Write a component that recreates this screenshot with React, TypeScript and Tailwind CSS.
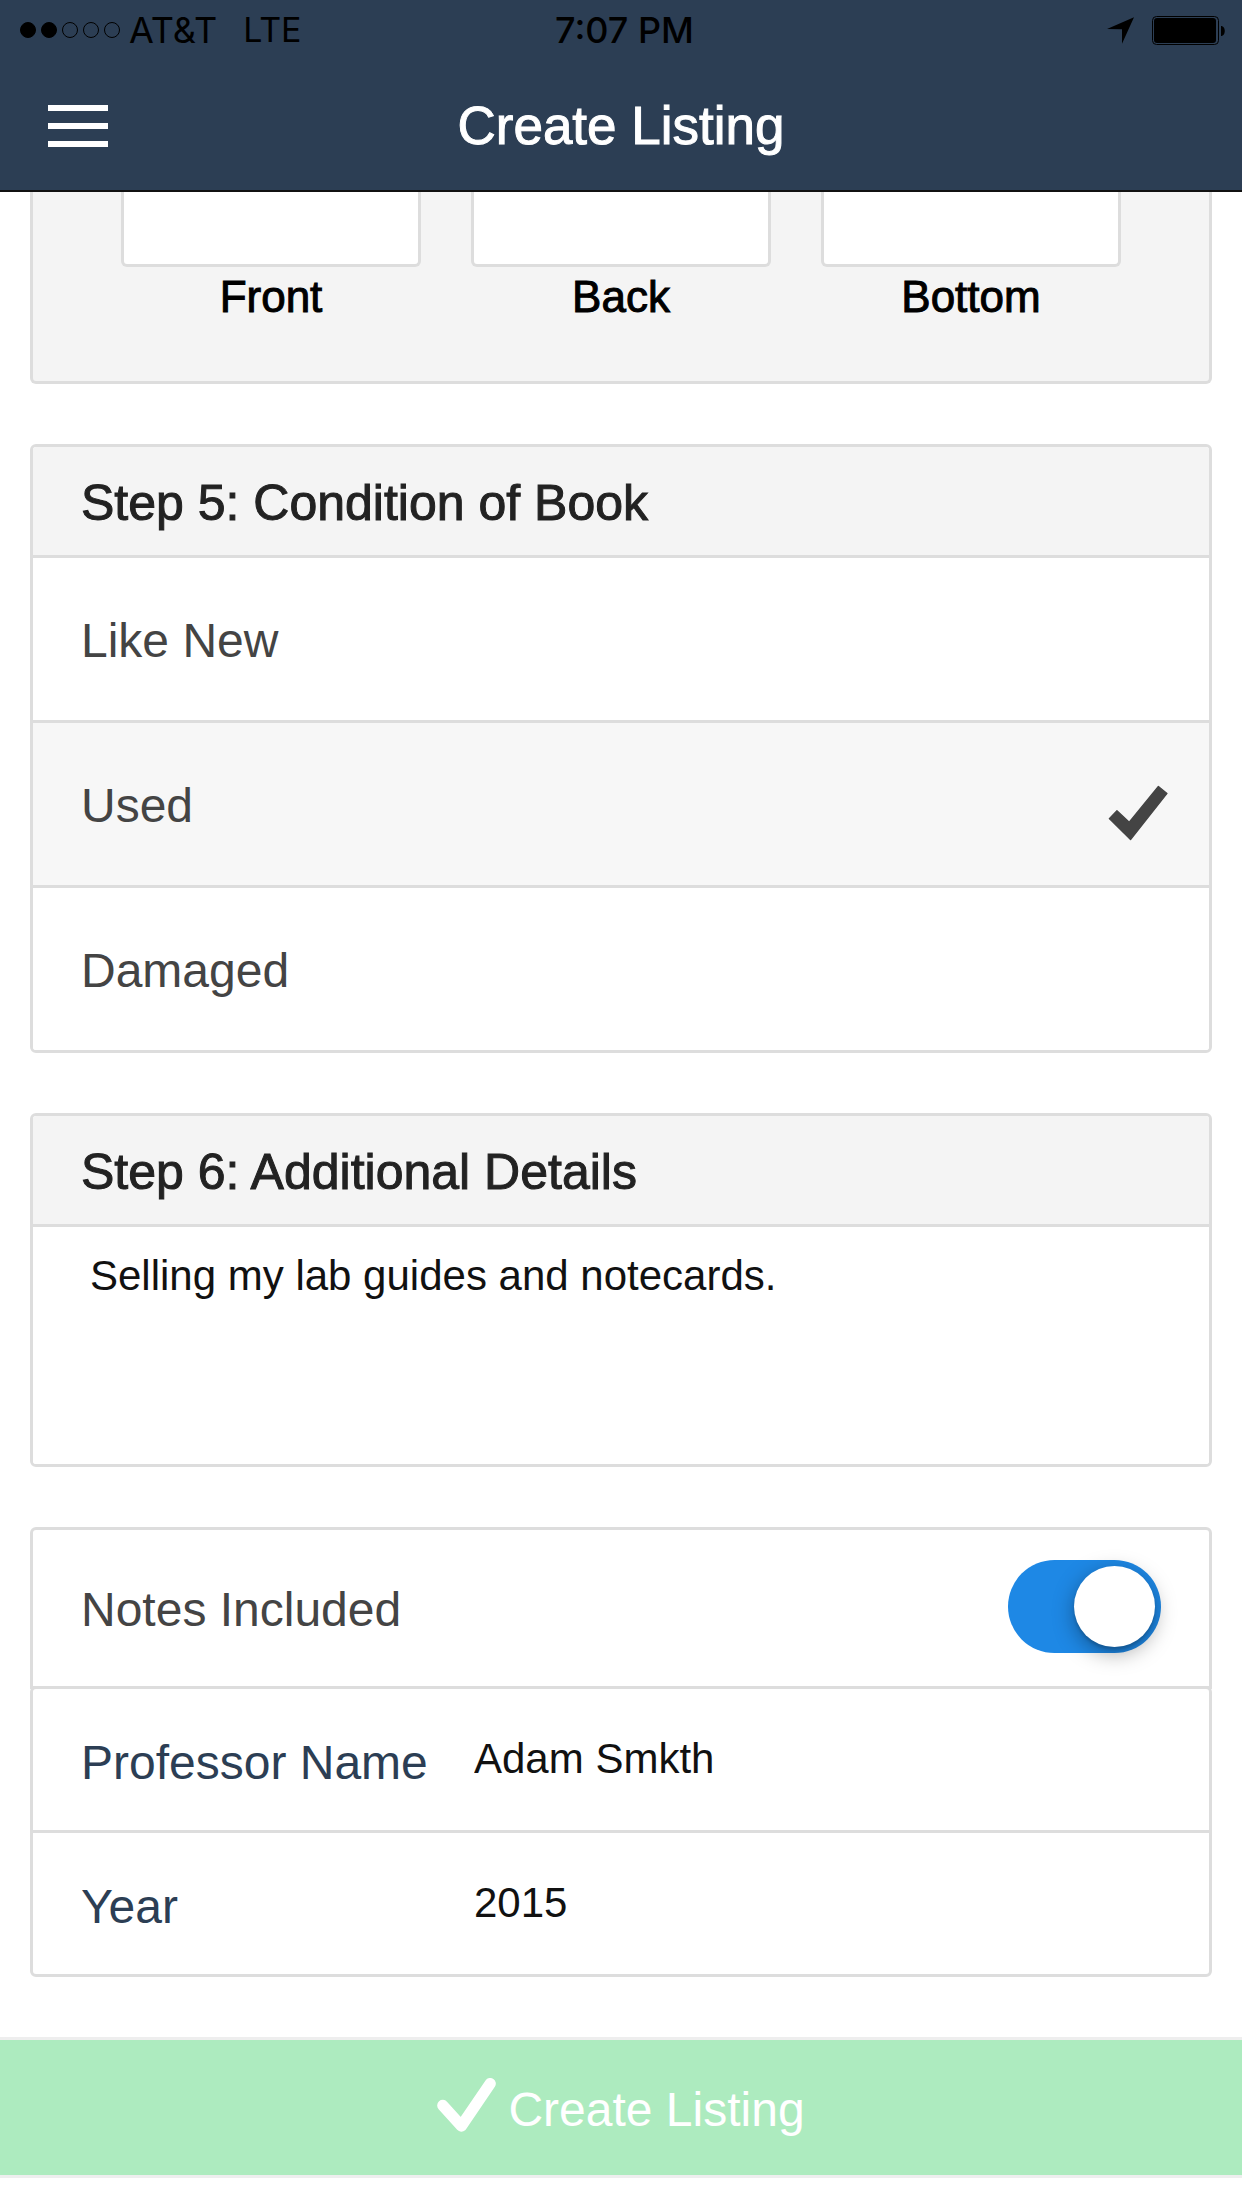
import { useState } from "react";
import type { ReactNode } from "react";

const conditions = ["Like New", "Used", "Damaged"];

function StatusBar() {
  return (
    <div className="grid h-[60px] grid-cols-[1fr_auto_1fr] items-center pr-[17px] pl-5 font-['Inter',sans-serif] text-[36px] leading-[60px] text-black">
      <div className="flex items-center">
        <div className="flex gap-[5px]">
          {[true, true, false, false, false].map((filled, i) => (
            <span
              key={i}
              className={`size-4 rounded-full border border-black ${filled ? "bg-black" : ""}`}
            />
          ))}
        </div>
        <span className="ml-[9px]">AT&amp;T</span>
        <span className="ml-[26px] text-[34px]">LTE</span>
      </div>
      <span className="pl-1 font-medium">7:07 PM</span>
      <div className="flex items-center justify-end gap-[18px]">
        <svg width="27" height="27" viewBox="0 0 81 79" aria-hidden="true">
          <path d="M0 35 81 0 45 79V36Z" fill="#000" />
        </svg>
        <svg width="73" height="29" viewBox="0 0 73 29" aria-hidden="true">
          <rect x="0.5" y="0.5" width="66" height="28" rx="4" fill="none" stroke="#000" />
          <rect x="2" y="2" width="62" height="25" rx="3" fill="#000" />
          <path d="M69 10c5 0 5 10 0 10Z" fill="#000" />
        </svg>
      </div>
    </div>
  );
}

function CardHeading({ children }: { children: ReactNode }) {
  return (
    <h2 className="border-b-3 border-[#ddd] bg-[#f4f4f4] px-12 pt-[26px] pb-[22px] text-[50px] leading-[60px] text-[#222] [-webkit-text-stroke:1px_#222]">
      {children}
    </h2>
  );
}

function Field({ id, label, initial }: { id: string; label: string; initial: string }) {
  return (
    <div className="flex items-center px-12">
      <label htmlFor={id} className="w-[393px] shrink-0 pt-[44px] pb-[37px] text-[48px] leading-[60px] text-[#2c3e54]">
        {label}
      </label>
      <input
        id={id}
        type="text"
        defaultValue={initial}
        className="mb-[2px] h-[60px] min-w-0 flex-1 bg-transparent text-[42px] leading-[60px] text-[#111] outline-none"
      />
    </div>
  );
}

export default function App() {
  const [condition, setCondition] = useState("Used");
  const [notes, setNotes] = useState(true);

  return (
    <div className="min-h-screen bg-white font-['Liberation_Sans',Arial,sans-serif]">
      <header className="border-b-2 border-[#111] bg-[#2c3e54]">
        <StatusBar />
        <div className="grid h-[130px] grid-cols-[1fr_auto_1fr] items-center px-12 pt-[2px]">
          <button type="button" aria-label="Menu" className="flex w-[60px] flex-col gap-3">
            <span className="h-[6px] bg-white" />
            <span className="h-[6px] bg-white" />
            <span className="h-[6px] bg-white" />
          </button>
          <h1 className="text-[53px] leading-[60px] text-white [-webkit-text-stroke:1px_#fff]">
            Create Listing
          </h1>
        </div>
      </header>

      <form onSubmit={(e) => e.preventDefault()}>
        <div className="flex flex-col gap-[60px] px-[30px] pb-[60px]">
          <section className="flex justify-between gap-[50px] rounded-b-[6px] border-3 border-t-0 border-[#ddd] bg-[#f4f4f4] px-[88px] pb-[54px]">
            {["Front", "Back", "Bottom"].map((side) => (
              <button key={side} type="button" className="flex flex-1 flex-col">
                <span className="h-[75px] w-full rounded-b-[6px] border-3 border-t-0 border-[#ddd] bg-white" />
                <span className="w-full text-center text-[44px] leading-[60px] text-black [-webkit-text-stroke:1px_#000]">
                  {side}
                </span>
              </button>
            ))}
          </section>

          <section className="overflow-hidden rounded-[6px] border-3 border-[#ddd]">
            <CardHeading>Step 5: Condition of Book</CardHeading>
            <div role="radiogroup" aria-label="Condition of Book" className="divide-y-3 divide-[#ddd]">
              {conditions.map((name) => (
                <label
                  key={name}
                  className={`flex items-center justify-between pr-[42px] pl-12 ${
                    condition === name ? "bg-[#f7f7f7]" : "bg-white"
                  }`}
                >
                  <span className="pt-[53px] pb-[49px] text-[48px] leading-[60px] text-[#444]">{name}</span>
                  <input
                    type="radio"
                    name="condition"
                    value={name}
                    checked={condition === name}
                    onChange={() => setCondition(name)}
                    className="sr-only"
                  />
                  {condition === name && (
                    <svg className="mt-[18px] overflow-visible" width="58" height="54" viewBox="0 0 175 162" aria-hidden="true">
                      <path
                        d="M1 98 24 74 61 109 149 1 175 22 65 161Z"
                        fill="#444"
                        stroke="#444"
                        strokeWidth="4"
                        strokeLinejoin="round"
                      />
                    </svg>
                  )}
                </label>
              ))}
            </div>
          </section>

          <section className="overflow-hidden rounded-[6px] border-3 border-[#ddd]">
            <CardHeading>Step 6: Additional Details</CardHeading>
            <textarea
              aria-label="Additional Details"
              defaultValue="Selling my lab guides and notecards."
              className="block h-[237px] w-full resize-none bg-white px-[57px] pt-[19px] text-[42px] leading-[60px] text-[#111] outline-none"
            />
          </section>

          <section>
            <div className="flex items-center justify-between rounded-t-[6px] border-3 border-[#ddd] px-12">
              <label htmlFor="notes" className="pt-[50px] pb-[46px] text-[48px] leading-[60px] text-[#444]">
                Notes Included
              </label>
              <span className="relative mb-[3px] h-[93px] w-[153px]">
                <input
                  id="notes"
                  type="checkbox"
                  role="switch"
                  checked={notes}
                  onChange={(e) => setNotes(e.target.checked)}
                  className="block h-full w-full appearance-none rounded-full bg-[#ddd] checked:bg-[#1e88e5]"
                />
                <span
                  className={`pointer-events-none absolute top-[6px] size-[81px] rounded-full bg-white shadow-[0_6px_21px_rgba(0,0,0,0.35),0_3px_3px_rgba(0,0,0,0.15)] ${
                    notes ? "right-[6px]" : "left-[6px]"
                  }`}
                />
              </span>
            </div>
            <div className="-mt-[3px] divide-y-3 divide-[#ddd] rounded-[6px] border-3 border-[#ddd]">
              <Field id="professor" label="Professor Name" initial="Adam Smkth" />
              <Field id="year" label="Year" initial="2015" />
            </div>
          </section>
        </div>

        <button
          type="submit"
          className="flex w-full items-center justify-center gap-3 border-y-3 border-[#eee] bg-[#adebbf] pt-[40px] pb-[35px] text-[48px] leading-[60px] text-white"
        >
          <svg className="-mt-[2px] mb-2" width="59" height="54" viewBox="0 0 177 163" aria-hidden="true">
            <path
              d="M17 83 73 145 160 17"
              fill="none"
              stroke="#fff"
              strokeWidth="34"
              strokeLinecap="round"
              strokeLinejoin="round"
            />
          </svg>
          Create Listing
        </button>
      </form>
    </div>
  );
}
